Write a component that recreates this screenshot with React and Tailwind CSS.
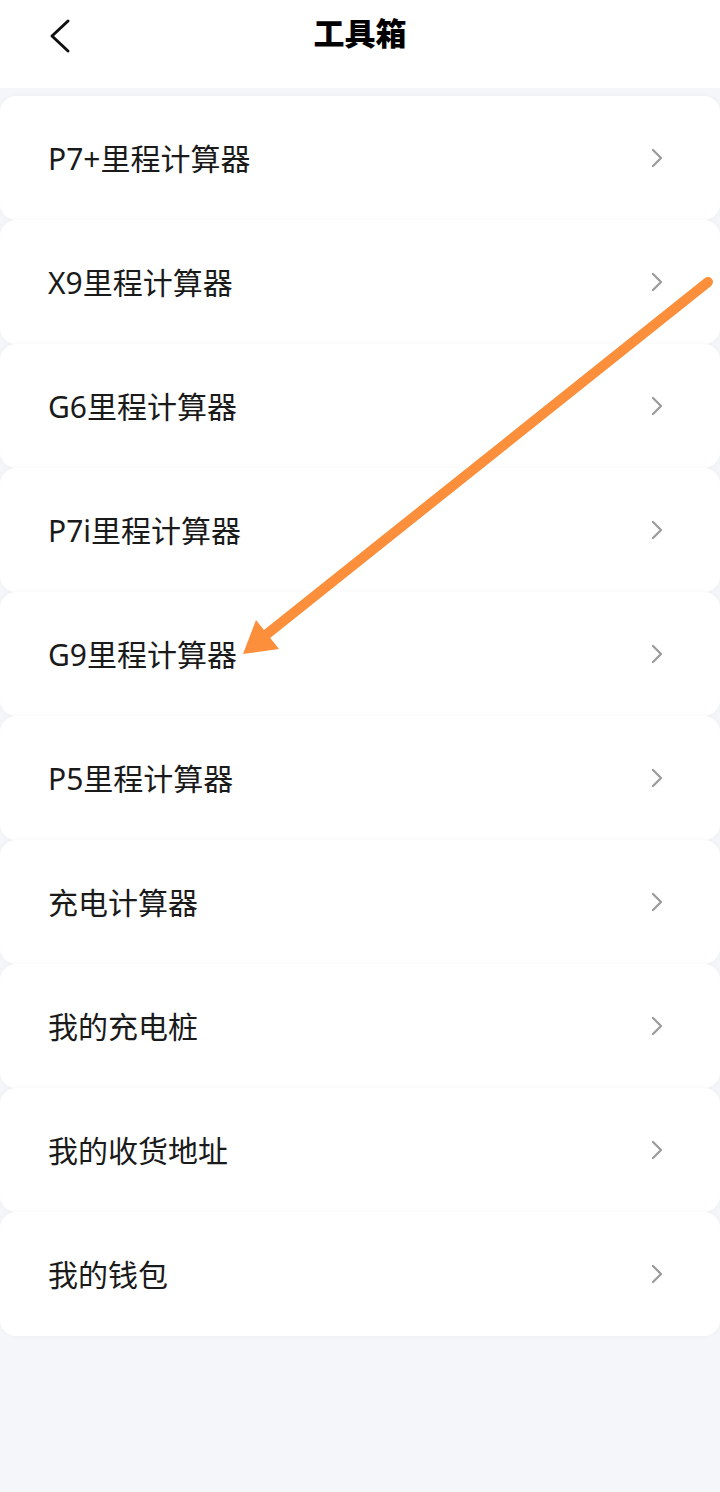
const items = [
  "P7+里程计算器",
  "X9里程计算器",
  "G6里程计算器",
  "P7i里程计算器",
  "G9里程计算器",
  "P5里程计算器",
  "充电计算器",
  "我的充电桩",
  "我的收货地址",
  "我的钱包",
];

const font = { fontFamily: '"Noto Sans", "Noto Sans CJK SC", sans-serif' };

const App = () => {
  return (
    <div className="relative min-h-[1492px] bg-[#f5f6fa]" style={font}>
      {/* header */}
      <div className="relative flex h-[88px] items-center justify-center bg-white">
        <svg className="absolute left-[46px] top-[18px]" width="26" height="36" viewBox="0 0 26 36">
          <path d="M22 3 L6 18 L22 33" fill="none" stroke="#111" strokeWidth="3" strokeLinecap="round" strokeLinejoin="round" />
        </svg>
        <h1 className="-mt-[21px] text-[31px] font-black text-black">工具箱</h1>
      </div>

      <div className="mt-[8px] flex flex-col">
        {items.map((label) => (
          <div
            key={label}
            className="flex h-[124px] items-center justify-between rounded-[16px] bg-white pl-[48px] pr-[56px] shadow-[0_0_6px_rgba(0,0,0,0.03)]"
          >
            <span className="text-[30px] text-[#1a1a1a]">{label}</span>
            <svg width="14" height="22" viewBox="0 0 14 22">
              <path d="M3 3 L11 11 L3 19" fill="none" stroke="#9a9a9a" strokeWidth="2.2" strokeLinecap="round" strokeLinejoin="round" />
            </svg>
          </div>
        ))}
      </div>

      {/* annotation arrow */}
      <svg className="pointer-events-none absolute left-0 top-0" width="720" height="720" viewBox="0 0 720 720">
        <line x1="708" y1="282" x2="262" y2="638" stroke="#fb8f3c" strokeWidth="10" strokeLinecap="round" />
        <polygon points="243,654 256,620 279,649" fill="#fb8f3c" />
      </svg>
    </div>
  );
};

export default App;
